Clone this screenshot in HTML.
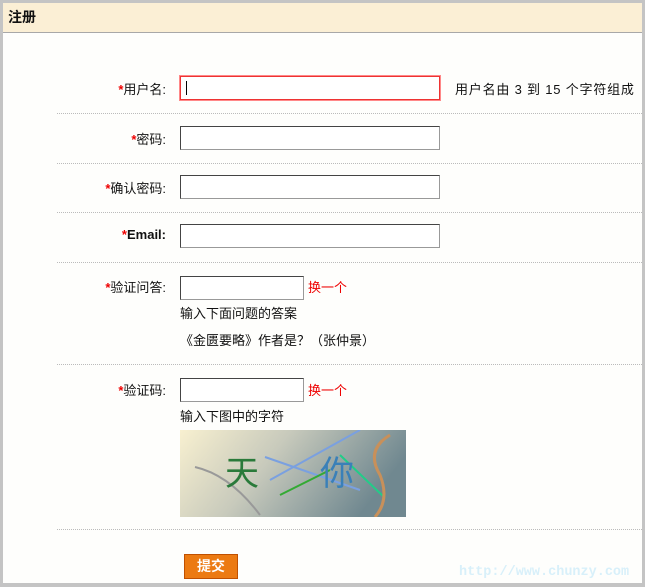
<!DOCTYPE html>
<html><head><meta charset="utf-8"><style>
*{margin:0;padding:0;box-sizing:border-box}
body{width:645px;height:587px;background:#c4c4c4;position:relative;overflow:hidden;font-family:"Liberation Sans","Noto Sans CJK SC",sans-serif;font-size:13px;color:#111}
#page{position:absolute;left:3px;top:3px;width:639px;height:580px;background:#fefefc;overflow:hidden}
#hd{position:absolute;left:0;top:0;width:639px;height:30px;background:#fbefd5;border-bottom:1px solid #a8a8a8;font-weight:bold;font-size:14px;padding:4px 0 0 5px}
.lab{position:absolute;right:476px;width:120px;text-align:right;white-space:nowrap}
.lab b{color:#e00;font-weight:bold}
.in{position:absolute;left:177px;width:260px;height:24px;border:1px solid #999;border-top-color:#444;border-left-color:#444;background:#fff}
.sep{position:absolute;left:54px;width:585px;border-top:1px dotted #bbb}
.t{position:absolute;white-space:nowrap}
.red{color:#e00}
</style></head><body>
<div id="page">
<div id="hd">注册</div>
<div class="lab" style="top:76px"><b>*</b>用户名:</div>
<div class="in" style="top:73px;border:1px solid #e33;outline:1px solid #f88"><div style="position:absolute;left:5px;top:4px;width:1px;height:14px;background:#000"></div></div>
<div class="t" style="left:452px;top:76px;letter-spacing:0.8px">用户名由 3 到 15 个字符组成</div>
<div class="sep" style="top:110px"></div>
<div class="lab" style="top:126px"><b>*</b>密码:</div>
<div class="in" style="top:123px"></div>
<div class="sep" style="top:160px"></div>
<div class="lab" style="top:175px"><b>*</b>确认密码:</div>
<div class="in" style="top:172px"></div>
<div class="sep" style="top:209px"></div>
<div class="lab" style="top:224px"><b>*</b><span style="font-weight:bold">Email:</span></div>
<div class="in" style="top:221px"></div>
<div class="sep" style="top:259px"></div>
<div class="lab" style="top:274px"><b>*</b>验证问答:</div>
<div class="in" style="top:273px;width:124px"></div>
<div class="t red" style="left:305px;top:274px">换一个</div>
<div class="t" style="left:177px;top:300px">输入下面问题的答案</div>
<div class="t" style="left:177px;top:327px">《金匮要略》作者是？（张仲景）</div>
<div class="sep" style="top:361px"></div>
<div class="lab" style="top:377px"><b>*</b>验证码:</div>
<div class="in" style="top:375px;width:124px"></div>
<div class="t red" style="left:305px;top:377px">换一个</div>
<div class="t" style="left:177px;top:403px">输入下图中的字符</div>
<svg style="position:absolute;left:177px;top:427px" width="226" height="87">
<defs><linearGradient id="g" x1="0" x2="1" y1="0" y2="0.3"><stop offset="0" stop-color="#f8f0d0"/><stop offset="0.45" stop-color="#c8cabc"/><stop offset="1" stop-color="#708890"/></linearGradient></defs>
<rect width="226" height="87" fill="url(#g)"/>
<path d="M15 37 Q50 45 80 85" stroke="#999" stroke-width="2" fill="none"/>
<path d="M90 50 L180 0" stroke="#7aa0e0" stroke-width="2"/>
<path d="M85 27 L180 60" stroke="#7aa0e0" stroke-width="2"/>
<path d="M100 65 L150 40" stroke="#3a3" stroke-width="2"/>
<path d="M160 25 L205 68" stroke="#2c8" stroke-width="2"/>
<path d="M210 5 Q185 20 200 45 Q210 70 195 87" stroke="#c8905a" stroke-width="3" fill="none"/>
<text x="45" y="55" font-size="34" fill="#2a7a3a" font-family="Noto Sans CJK SC,sans-serif">天</text>
<text x="140" y="55" font-size="34" fill="#3a80b8" font-family="Noto Sans CJK SC,sans-serif">你</text>
</svg>
<div class="sep" style="top:526px"></div>
<div class="t" style="left:181px;top:551px;width:54px;height:25px;background:#ec7a12;border:1px solid #c05000;color:#fff;font-weight:bold;font-size:14px;text-align:center;line-height:23px">提交</div>
<div class="t" style="left:456px;top:562px;color:#d8f0fa;font-weight:bold;font-family:'Liberation Mono',monospace;font-size:13.5px">http://www.chunzy.com</div>
</div>
</body></html>
